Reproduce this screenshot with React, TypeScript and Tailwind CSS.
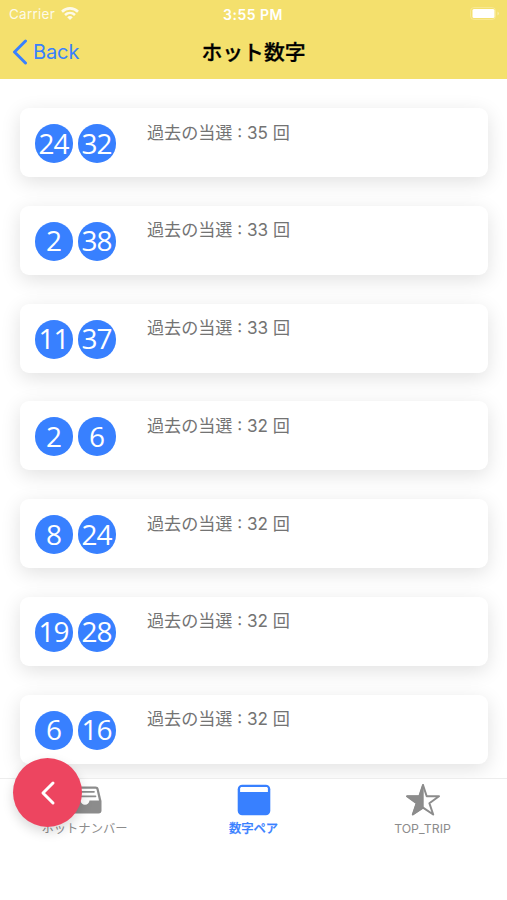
interface Pair {
    numbers: [number, number];
    count: number;
}

const pairs: Pair[] = [
    { numbers: [24, 32], count: 35 },
    { numbers: [2, 38], count: 33 },
    { numbers: [11, 37], count: 33 },
    { numbers: [2, 6], count: 32 },
    { numbers: [8, 24], count: 32 },
    { numbers: [19, 28], count: 32 },
    { numbers: [6, 16], count: 32 },
];

function StatusBar() {
    return (
        <div className="grid h-[28px] grid-cols-3 items-center pl-[9px] pr-[7px] text-[13.5px] text-white">
            <div className="flex items-center gap-[6px] opacity-85">
                <span className="tracking-[0.25px]">Carrier</span>
                <svg width="18" height="14" viewBox="0 0 18 14" fill="none" stroke="currentColor" strokeWidth="2.6">
                    <path d="M1 4.700C5.5.3 12.5.3 17 4.700" />
                    <path d="M4 8c2.9-2.7 7.1-2.7 10 0" />
                    <path d="M6.2 10.2c1.7-1.5 3.9-1.5 5.6 0L9 13z" fill="currentColor" stroke="none" />
                </svg>
            </div>
            <span className="-ml-[3px] text-center text-[14px] font-semibold tracking-[0.5px] whitespace-nowrap">3:55 PM</span>
            <svg className="justify-self-end" width="30" height="14" viewBox="0 0 30 14">
                <rect x=".5" y=".5" width="25" height="12" rx="3.5" fill="none" stroke="white" strokeOpacity=".25" />
                <rect x="2.5" y="2" width="22" height="9" rx="1.5" fill="white" />
                <path d="M27.5 4.500v4c2-1 2-3 0-4z" fill="white" fillOpacity=".4" />
            </svg>
        </div>
    );
}

function Ball({ value }: { value: number }) {
    return (
        <div className="flex h-[39px] w-[38px] items-center justify-center rounded-full bg-[#3880ff] pb-[2px] font-['Open_Sans',sans-serif] text-[28px] leading-none tracking-[-1px] text-white">
            <span className="-ml-px">{value}</span>
        </div>
    );
}

function PairCard({ pair }: { pair: Pair }) {
    return (
        <div className="flex h-[69px] shrink-0 rounded-[9px] bg-white pl-[15px] pt-4 shadow-[0_5px_20px_rgba(0,0,0,0.12)]">
            <div className="flex w-28 gap-[5px]">
                {pair.numbers.map((n) => (
                    <Ball key={n} value={n} />
                ))}
            </div>
            <p className="-mt-[3.5px] text-[17.1px] leading-6 text-[#737373]">過去の当選 : {pair.count} 回</p>
        </div>
    );
}

function TrayIcon() {
    return (
        <svg width="34" height="28" viewBox="0 0 34 28">
            <path d="M6.500.5h21c1.700 0 2.700.8 3.100 2.200L33.500 15v9.500c0 2-1 3-3 3h-27c-2 0-3-1-3-3V15L3.400 2.700C3.800 1.300 4.800.5 6.500.5z" fill="#8c8c8c" />
            <path d="M6.800 2.800h20.400c.8 0 1.200.3 1.400 1L31 14.500h-9.500c-.3 2.600-2 4.200-4.500 4.200s-4.200-1.600-4.500-4.200H3L5.400 3.800c.2-.7.600-1 1.400-1z" fill="white" />
            <path d="M8 5.800h18M6.500 10.300h21" stroke="#8c8c8c" strokeWidth="1.700" strokeLinecap="round" />
        </svg>
    );
}

function WindowIcon() {
    return (
        <svg width="34" height="32" viewBox="0 0 34 32">
            <rect x=".7" y=".8" width="32.600" height="30.400" rx="4.500" fill="#3880ff" />
            <path d="M5 3h24c1.300 0 1.900.7 1.900 1.700V8H3.100V4.700C3.100 3.700 3.700 3 5 3z" fill="white" />
        </svg>
    );
}

function StarHalfIcon() {
    return (
        <svg width="36" height="34" viewBox="0 0 36 34" stroke="#8c8c8c" strokeWidth="2" strokeLinejoin="round">
            <path d="M18 2l3.700 11.300h12.300L24.400 20.200 28.200 31.500 18 24.700 7.800 31.500l3.800-11.300L2 13.300h12.300z" fill="none" />
            <path d="M18 2v22.700L7.800 31.500l3.800-11.300L2 13.300h12.300z" fill="#8c8c8c" strokeWidth="1.400" />
        </svg>
    );
}

const tabs = [
    { label: 'ホットナンバー', icon: <TrayIcon />, active: false },
    { label: '数字ペア', icon: <WindowIcon />, active: true },
    { label: 'TOP_TRIP', icon: <StarHalfIcon />, active: false },
];

export default function App() {
    return (
        <div className="relative flex h-[900px] w-[507px] flex-col overflow-hidden bg-white font-[Inter,'Noto_Sans_CJK_JP',sans-serif]">
            <header className="h-[79px] shrink-0 bg-[#f4e06d]">
                <StatusBar />
                <div className="grid h-[48px] grid-cols-3 items-center">
                    <button className="flex items-center gap-[5px] pl-3 text-[20px] tracking-[-0.1px] text-[#3880ff]">
                        <svg width="16" height="26" viewBox="0 0 16 26" fill="none" stroke="currentColor" strokeWidth="3" strokeLinecap="round" strokeLinejoin="round">
                            <path d="M13.500 2L2.500 13l11 11" />
                        </svg>
                        Back
                    </button>
                    <h1 className="pt-[2px] text-center text-[20.8px] font-medium whitespace-nowrap text-black [-webkit-text-stroke:0.3px_black]">ホット数字</h1>
                </div>
            </header>

            <main className="flex h-[699px] shrink-0 flex-col gap-[28.8px] overflow-hidden pl-5 pr-[19px] pt-[29px]">
                {pairs.map((pair) => (
                    <PairCard key={pair.numbers.join('-')} pair={pair} />
                ))}
            </main>

            <nav className="grid h-[61px] shrink-0 grid-cols-3 border-t border-[#ededed] bg-white">
                {tabs.map((tab) => (
                    <div
                        key={tab.label}
                        className={`flex flex-col items-center text-[12.3px] leading-4 ${tab.active ? 'font-medium text-[#3880ff] [-webkit-text-stroke:0.25px_#3880ff]' : 'font-normal text-[#8c8c8c]'}`}
                    >
                        <div className="flex h-[42px] items-center">{tab.icon}</div>
                        <span className="whitespace-nowrap">{tab.label}</span>
                    </div>
                ))}
            </nav>

            {/* floating back button */}
            <button className="absolute left-[13px] top-[758px] flex h-[69px] w-[69px] items-center justify-center rounded-full bg-[#ed4560] shadow-[0_5px_12px_rgba(0,0,0,0.15)]">
                <svg width="16" height="26" viewBox="0 0 16 26" fill="none" stroke="white" strokeWidth="3" strokeLinecap="round" strokeLinejoin="round">
                    <path d="M13 3L3 13l10 10" />
                </svg>
            </button>
        </div>
    );
}
